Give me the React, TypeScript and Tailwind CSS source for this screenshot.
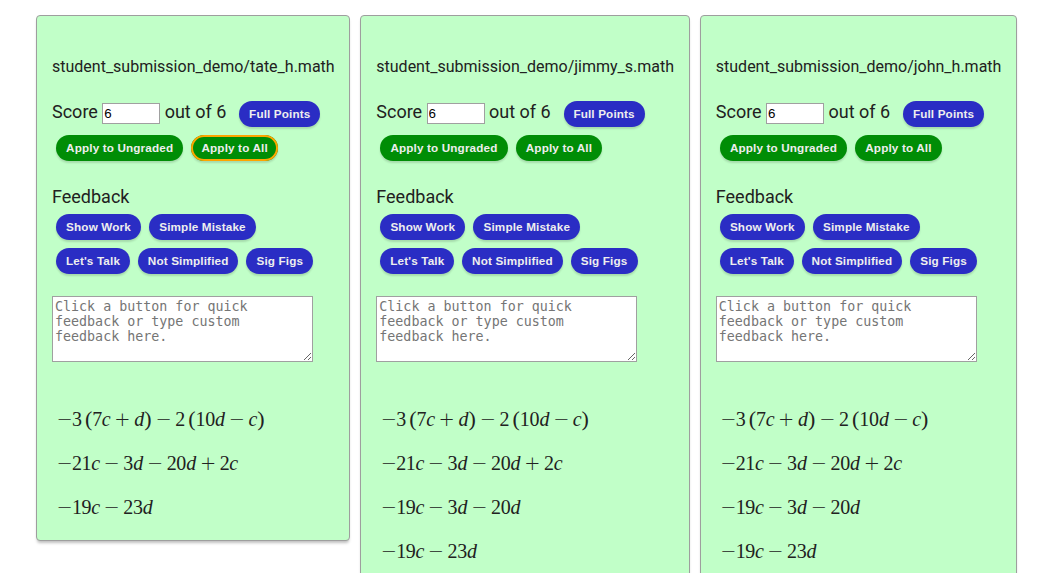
import React from "react";

type PillProps = { label: string; width: string; green?: boolean; active?: boolean };

function Pill({ label, width, green, active }: PillProps) {
  return (
    <button
      className={`mx-1 h-[26px] shrink-0 rounded-full text-center font-['Liberation_Sans',sans-serif] text-[11.7px] font-bold leading-[26px] tracking-[0.15px] whitespace-nowrap text-[#eeeeee] shadow-[0_2px_2px_rgba(0,0,0,0.14)] ${width} ${green ? "bg-[#008d06]" : "bg-[#2a2dc4]"} ${active ? "outline-2 -outline-offset-2 outline-[#ffa500]" : ""}`}
    >
      {label}
    </button>
  );
}

function tokenClass(token: string, first: boolean) {
  if (/[−+]/.test(token)) {
    const base = "w-[15.06px] pt-[2px] font-['DejaVu_Sans',sans-serif] font-extralight text-[19.36px]";
    return first ? base : `${base} mx-[4.3px]`;
  }
  if (token === "(") return "ml-[3.2px] w-[7.5px] text-[22px]";
  if (token === ")") return "w-[7.5px] text-[22px]";
  if (token === "c") return "w-[8.4px] italic";
  if (token === "d") return "w-[10.1px] italic";
  return "w-[9.68px]";
}

function Formula({ text }: { text: string }) {
  return (
    <div className="flex h-11 items-center font-['Liberation_Serif',serif] text-[20px] leading-11">
      {text.split("").map((token, i) => (
        <span key={i} className={`flex h-11 shrink-0 items-center justify-center ${tokenClass(token, i === 0)}`}>
          {token}
        </span>
      ))}
    </div>
  );
}

type CardProps = { name: string; lines: string[]; width: string; active?: boolean };

function Card({ name, lines, width, active }: CardProps) {
  return (
    <section className={`${width} shrink-0 rounded-[4px] border border-[#9e9e9e] bg-[#c1ffc8] px-[15px] pb-[11px] shadow-[0_3px_3px_-1px_rgba(0,0,0,0.25)]`}>
      <h2 className="mt-[39px] h-6 text-[16px] leading-6">{name}</h2>
      <div className="mt-[18px] flex h-[34px] items-center text-[18px]">
        <span className="mb-[5px]">Score</span>
        <input
          className="mr-[4.4px] mb-[2px] ml-[4.4px] h-[21px] w-[58px] border border-[#a0a0a0] bg-white px-[1px] font-['Liberation_Sans',sans-serif] text-[13.33px] text-black"
          defaultValue="6"
        />
        <span className="mr-[9px] mb-[5px]">out of 6</span>
        <Pill label="Full Points" width="w-[81px]" />
      </div>
      <div className="flex h-[34px] items-center">
        <Pill label="Apply to Ungraded" width="w-[127.3px]" green />
        <Pill label="Apply to All" width="w-[86.7px]" green active={active} />
      </div>
      <div className="mt-[20px] h-[25px] text-[18px] leading-6">Feedback</div>
      <div className="flex h-[34px] items-center">
        <Pill label="Show Work" width="w-[85px]" />
        <Pill label="Simple Mistake" width="w-[107px]" />
      </div>
      <div className="flex h-[34px] items-center">
        <Pill label="Let's Talk" width="w-[74px]" />
        <Pill label="Not Simplified" width="w-[100.3px]" />
        <Pill label="Sig Figs" width="w-[67px]" />
      </div>
      <textarea
        className="mt-[18px] block h-[66px] w-[261px] border border-[#a0a0a0] bg-white p-[2px] font-['DejaVu_Sans_Mono',monospace] text-[13.33px] leading-[15px] placeholder:text-[#757575]"
        placeholder="Click a button for quick feedback or type custom feedback here."
      />
      <div className="mt-[35px] pl-[5px]">
        {lines.map((line) => (
          <Formula key={line} text={line} />
        ))}
      </div>
    </section>
  );
}

const short = ["−3(7c+d)−2(10d−c)", "−21c−3d−20d+2c", "−19c−23d"];
const full = ["−3(7c+d)−2(10d−c)", "−21c−3d−20d+2c", "−19c−3d−20d", "−19c−23d"];

export default function App() {
  return (
    <main className="flex h-[573px] items-start gap-[10px] overflow-hidden bg-white pt-[15px] pl-9 font-[Roboto,sans-serif] text-[#212121]">
      <Card width="w-[314.3px]" name="student_submission_demo/tate_h.math" lines={short} active />
      <Card width="w-[329.5px]" name="student_submission_demo/jimmy_s.math" lines={full} />
      <Card width="w-[317px]" name="student_submission_demo/john_h.math" lines={full} />
    </main>
  );
}
